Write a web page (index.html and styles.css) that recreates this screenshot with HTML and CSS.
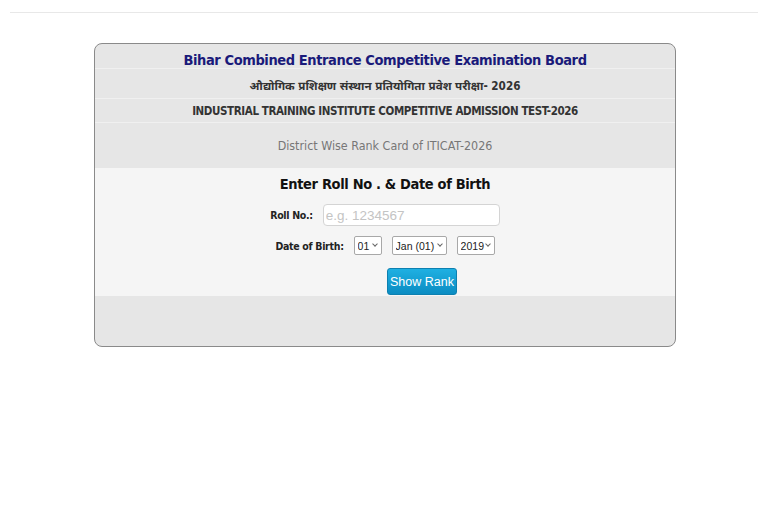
FILE: index.html
```html
<!DOCTYPE html>
<html lang="en">
<head>
<meta charset="utf-8">
<title>ITICAT-2026 Rank Card</title>
<link rel="stylesheet" href="styles.css">
</head>
<body>
<div class="topline"></div>
<div class="card">
  <div class="row r-title">Bihar Combined Entrance Competitive Examination Board</div>
  <div class="row r-hindi">औद्योगिक प्रशिक्षण संस्थान प्रतियोगिता प्रवेश परीक्षा- 2026</div>
  <div class="row r-eng">INDUSTRIAL TRAINING INSTITUTE COMPETITIVE ADMISSION TEST-2026</div>
  <div class="row r-dist">District Wise Rank Card of ITICAT-2026</div>
  <form class="form">
    <div class="f-head">Enter Roll No . &amp; Date of Birth</div>
    <div class="f-row f-roll">
      <label class="lbl" for="roll">Roll No.:</label>
      <input class="inp" id="roll" type="text" placeholder="e.g. 1234567">
    </div>
    <div class="f-row f-dob">
      <label class="lbl">Date of Birth:</label>
      <span class="selwrap s-day"><select class="sel"><option>01</option></select></span>
      <span class="selwrap s-mon"><select class="sel"><option>Jan (01)</option></select></span>
      <span class="selwrap s-yr"><select class="sel"><option>2019</option></select></span>
    </div>
    <div class="f-btn"><button type="button" class="btn">Show Rank</button></div>
  </form>
  <div class="bottom"></div>
</div>
</body>
</html>
```
FILE: styles.css
```css
html, body { margin: 0; padding: 0; background: #fff; }
body { font-family: "DejaVu Sans Condensed", "DejaVu Sans", "Noto Sans Devanagari", "Lohit Devanagari", sans-serif; }
.topline { height: 1px; background: #e8e8e8; margin: 12px 10px 0; }
.card {
  width: 580px; margin: 30px 0 0 94px;
  border: 1px solid #8a8a8a; border-radius: 8px;
  background: #e6e6e6; overflow: hidden;
}
.row { text-align: center; box-sizing: border-box; display: flex; align-items: center; justify-content: center; white-space: nowrap; }
.r-title { height: 24px; color: #1a1a7a; font-weight: bold; font-size: 14.5px; letter-spacing: -0.4px; padding-top: 7px; }
.r-hindi { height: 30px; border-top: 1px solid #f0f0f0; color: #333; font-weight: bold; font-size: 11.6px; padding-top: 7px; font-family: "DejaVu Sans Condensed", "Noto Sans Devanagari", "Lohit Devanagari", "Noto Sans", sans-serif; }
.r-eng { height: 24px; border-top: 1px solid #f0f0f0; color: #333; font-weight: bold; font-size: 11.5px; letter-spacing: -0.4px; }
.r-dist { height: 46px; border-top: 1px solid #f0f0f0; color: #777; font-size: 12.4px; }
.form { height: 128px; background: #f5f5f5; box-sizing: border-box; padding-top: 6px; margin: 0; }
.f-head { text-align: center; font-weight: bold; font-size: 14.5px; letter-spacing: -0.35px; color: #111; height: 20px; line-height: 20px; }
.f-row { display: flex; justify-content: center; align-items: center; gap: 10px; }
.f-roll { margin-top: 10px; height: 22px; }
.f-dob { margin-top: 10px; height: 19px; }
.lbl { font-weight: bold; font-size: 10.5px; letter-spacing: -0.3px; color: #222; }
.inp {
  width: 177px; height: 22px; box-sizing: border-box; border: 1px solid #d4d4d4; border-radius: 4px;
  background: #fff; font-family: "Liberation Sans", Arial, sans-serif; font-size: 13.5px; padding: 0 2px; margin: 0;
}
.inp::placeholder { color: #c4c4c4; }
.selwrap { position: relative; display: block; height: 19px; }
.selwrap::after {
  content: ""; position: absolute; right: 5px; top: 6px; width: 3px; height: 3px;
  border-right: 1px solid #666; border-bottom: 1px solid #666; transform: rotate(45deg);
  pointer-events: none;
}
.sel {
  -webkit-appearance: none; appearance: none; display: block;
  width: 100%; height: 19px; box-sizing: border-box; border: 1px solid #a8a8a8; border-radius: 2px; background: #fff;
  font-family: "Liberation Sans", Arial, sans-serif; font-size: 10.5px; color: #222; margin: 0; padding: 0 0 0 3px;
}
.s-day { width: 28px; }
.s-mon { width: 55px; }
.s-yr { width: 38px; }
.f-btn { margin-top: 13px; padding-left: 292px; }
.btn {
  width: 70px; height: 27px; border: 1px solid #0d80b0; border-radius: 3px;
  background: linear-gradient(#1fb0e2, #0b8cc2); color: #fff;
  font-family: "Liberation Sans", Arial, sans-serif; font-size: 12.5px; padding: 0; margin: 0;
}
.bottom { height: 50px; }
```
